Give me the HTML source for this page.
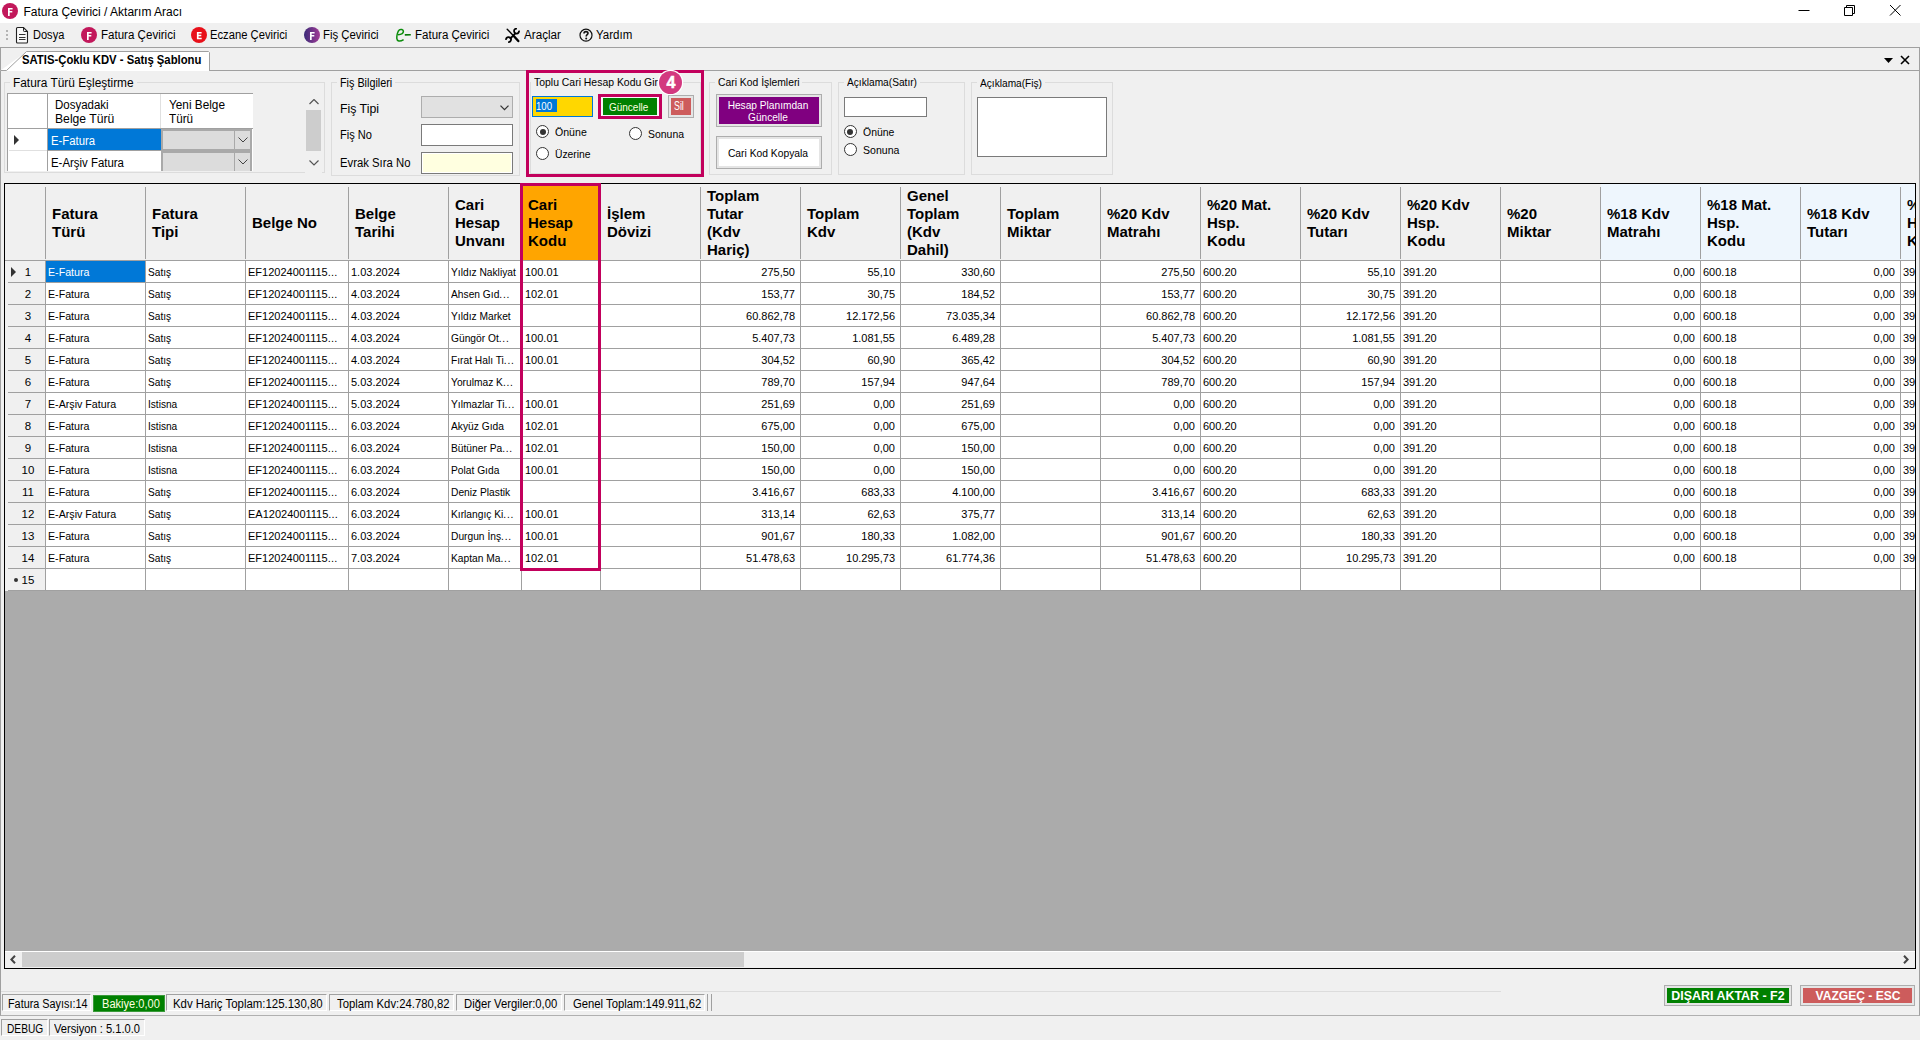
<!DOCTYPE html><html><head><meta charset="utf-8"><title>Fatura Çevirici</title><style>
*{box-sizing:border-box;margin:0;padding:0}
html,body{width:1920px;height:1040px;overflow:hidden}
body{position:relative;background:#f0f0f0;font-family:"Liberation Sans", sans-serif;font-size:12px;color:#000}
.abs{position:absolute}
.t{position:absolute;white-space:nowrap}
.gb{position:absolute;border:1px solid #dcdcdc}
.gl{position:absolute;background:#f0f0f0;height:12px}
.hd{position:absolute;top:184px;height:76px;display:flex;align-items:center;padding-top:1.5px;font-weight:bold;font-size:15px;line-height:18px;padding-left:7px;white-space:nowrap}
.vs{position:absolute;width:1px;background:#a0a0a0}
.hs{position:absolute;height:1px;background:#a0a0a0}
.c{position:absolute;height:22px;line-height:22px;font-size:11px;white-space:nowrap}
.r{text-align:right}
.radio{position:absolute;width:13px;height:13px;border-radius:50%;border:1px solid #333;background:#fff}
.radio.on::after{content:"";position:absolute;left:2.5px;top:2.5px;width:6px;height:6px;border-radius:50%;background:#333}
.sb{position:absolute;top:994px;height:17px;border-top:1px solid #a0a0a0;border-left:1px solid #a0a0a0;border-right:1px solid #fff;border-bottom:1px solid #fff}
</style></head><body>
<div class="abs" style="left:0;top:0;width:1920px;height:23px;background:#fff"></div>
<svg class="abs" style="left:2px;top:3px" width="16" height="16" viewBox="0 0 16 16"><circle cx="8" cy="8" r="8" fill="#c2185b"/><path d="M6 4.9h4.6v1.6H7.7v1.5h2.6v1.5H7.7v3.6H6z" fill="#fff"/></svg>
<div class="t" style="left:23.40px;top:4.94px;font-size:12px;line-height:14px;font-weight:400;color:#000;">Fatura Çevirici / Aktarım Aracı</div>
<svg class="abs" style="left:1795px;top:3px" width="16" height="16"><path d="M3.5 7.5h11" stroke="#000" stroke-width="1"/></svg>
<svg class="abs" style="left:1842px;top:2px" width="16" height="16"><path d="M2.5 5.5h8v8h-8z M4.5 5.5v-2h8v8h-2" fill="none" stroke="#000" stroke-width="1"/></svg>
<svg class="abs" style="left:1887px;top:3px" width="16" height="16"><path d="M3 2l10.5 10.5M13.5 2l-10.5 10.5" stroke="#000" stroke-width="1"/></svg>
<div class="abs" style="left:6px;top:30px;width:2px;height:2px;background:#b4b4b4"></div>
<div class="abs" style="left:6px;top:34px;width:2px;height:2px;background:#b4b4b4"></div>
<div class="abs" style="left:6px;top:38px;width:2px;height:2px;background:#b4b4b4"></div>
<svg class="abs" style="left:15px;top:26px" width="14" height="18" viewBox="0 0 14 18"><path d="M1.5 2.5a1 1 0 0 1 1-1h6l4 4v10.5a1 1 0 0 1-1 1h-9a1 1 0 0 1-1-1z" fill="#fafafa" stroke="#222" stroke-width="1.1"/><path d="M8.5 1.5v3.2a0.8 0.8 0 0 0 0.8 0.8h3.2" fill="none" stroke="#222" stroke-width="1"/><path d="M4 8.5h6.5M4 11.5h6.5M4 13.5h6.5" stroke="#333" stroke-width="1"/></svg>
<div class="t" style="left:33.30px;top:27.84px;font-size:12px;line-height:14px;font-weight:400;color:#000;transform:scaleX(0.920);transform-origin:left top;">Dosya</div>
<svg class="abs" style="left:81px;top:27px" width="16" height="16" viewBox="0 0 16 16"><circle cx="8" cy="8" r="8" fill="#c2185b"/><path d="M6 4.9h4.6v1.6H7.7v1.5h2.6v1.5H7.7v3.6H6z" fill="#fff"/></svg>
<div class="t" style="left:100.50px;top:27.84px;font-size:12px;line-height:14px;font-weight:400;color:#000;transform:scaleX(0.963);transform-origin:left top;">Fatura Çevirici</div>
<svg class="abs" style="left:191px;top:27px" width="16" height="16" viewBox="0 0 16 16"><circle cx="8" cy="8" r="8" fill="#e8101a"/><path d="M5.9 4.9h4.7v1.5H7.6v1.4h2.7v1.4H7.6v1.6h3.1v1.5H5.9z" fill="#fff"/></svg>
<div class="t" style="left:210.40px;top:27.84px;font-size:12px;line-height:14px;font-weight:400;color:#000;transform:scaleX(0.935);transform-origin:left top;">Eczane Çevirici</div>
<svg class="abs" style="left:304px;top:27px" width="16" height="16" viewBox="0 0 16 16"><defs><linearGradient id="g304" x1="0" y1="0" x2="1" y2="0"><stop offset="0" stop-color="#3b2a78"/><stop offset="1" stop-color="#a23c96"/></linearGradient></defs><circle cx="8" cy="8" r="8" fill="url(#g304)"/><path d="M6 4.9h4.6v1.6H7.7v1.5h2.6v1.5H7.7v3.6H6z" fill="#fff"/></svg>
<div class="t" style="left:323.20px;top:27.84px;font-size:12px;line-height:14px;font-weight:400;color:#000;transform:scaleX(0.948);transform-origin:left top;">Fiş Çevirici</div>
<svg class="abs" style="left:395px;top:28px" width="17" height="15" viewBox="0 0 17 15"><path d="M3 6.8C6 6.6 8.4 5.6 8.4 3.3C8.4 1.4 5.6 1 4.4 1.8C2.6 3 1.6 7.8 1.8 10.4C2 13.2 4.6 14.2 8.6 11.6" fill="none" stroke="#0a8c0a" stroke-width="1.5"/><path d="M9.8 6.9L15.8 6.7" stroke="#0a7a0a" stroke-width="1.6"/></svg>
<div class="t" style="left:414.50px;top:27.84px;font-size:12px;line-height:14px;font-weight:400;color:#000;transform:scaleX(0.960);transform-origin:left top;">Fatura Çevirici</div>
<svg class="abs" style="left:505px;top:28px" width="16" height="16" viewBox="0 0 16 16"><path d="M2.2 1.3L7.8 6.9" stroke="#000" stroke-width="1.4" stroke-linecap="round"/><path d="M9 8.3L13.3 13" stroke="#000" stroke-width="2.4" stroke-linecap="round"/><path d="M10.6 5.2L5 10.8" stroke="#000" stroke-width="1.9"/><path d="M11.95 0.6A2.5 2.5 0 1 0 14 2.6" fill="none" stroke="#000" stroke-width="1.8"/><path d="M3.2 14A2.5 2.5 0 1 0 1.1 11.9" fill="none" stroke="#000" stroke-width="1.8"/></svg>
<div class="t" style="left:524.25px;top:27.84px;font-size:12px;line-height:14px;font-weight:400;color:#000;transform:scaleX(0.973);transform-origin:left top;">Araçlar</div>
<svg class="abs" style="left:578.5px;top:28px" width="14" height="14" viewBox="0 0 14 14"><circle cx="7" cy="7.2" r="6" fill="none" stroke="#111" stroke-width="1.2"/><path d="M5 5.6C5 4.1 5.9 3.6 7 3.6C8.2 3.6 9 4.3 9 5.3C9 6.6 7.2 6.8 7.2 8.4" fill="none" stroke="#111" stroke-width="1.6"/><circle cx="7.2" cy="10.4" r="1" fill="#111"/></svg>
<div class="t" style="left:596.25px;top:27.84px;font-size:12px;line-height:14px;font-weight:400;color:#000;transform:scaleX(0.959);transform-origin:left top;">Yardım</div>
<div class="abs" style="left:0;top:47px;width:1920px;height:969px;border:1px solid #a0a0a0;border-bottom-color:#b0b0b0"></div>
<div class="abs" style="left:0;top:70px;width:1920px;height:1px;background:#a0a0a0"></div>
<svg class="abs" style="left:0;top:50px" width="212" height="22" viewBox="0 0 212 22"><path d="M0.5 20.5 L26.5 1.5 H209.5 V21 H0.5z" fill="#fff" stroke="none"/><path d="M0.5 20.5 H6.5 L26.5 1.5 H208.5 L209.5 2.5 V21" fill="none" stroke="#a0a0a0" stroke-width="1"/></svg>
<div class="abs" style="left:1px;top:71px;width:1917px;height:1px;background:#f0f0f0"></div>
<div class="t" style="left:22.00px;top:53.09px;font-size:12px;line-height:14px;font-weight:700;color:#000;transform:scaleX(0.942);transform-origin:left top;">SATIS-Çoklu KDV - Satış Şablonu</div>
<svg class="abs" style="left:1884px;top:57px" width="10" height="8"><path d="M0 1h9l-4.5 5z" fill="#000"/></svg>
<svg class="abs" style="left:1900px;top:55px" width="11" height="10"><path d="M1 1l8 8M9 1l-8 8" stroke="#000" stroke-width="1.6"/></svg>
<div class="gb" style="left:4px;top:82px;width:321px;height:91px"></div>
<div class="gl" style="left:10.4px;top:77px;width:126.6px"></div>
<div class="t" style="left:13.40px;top:76.14px;font-size:12px;line-height:14px;font-weight:400;color:#000;transform:scaleX(0.990);transform-origin:left top;">Fatura Türü Eşleştirme</div>
<div class="abs" style="left:7px;top:93px;width:246px;height:78px;border-left:1px solid #a0a0a0;border-top:1px solid #a0a0a0;background:#fff;overflow:hidden">
<div class="abs" style="left:39px;top:0;width:1px;height:80px;background:#a0a0a0"></div>
<div class="abs" style="left:152px;top:0;width:1px;height:34px;background:#e0e0e0"></div>
<div class="abs" style="left:0;top:34px;width:246px;height:1px;background:#a0a0a0"></div>
<div class="abs" style="left:40px;top:35px;width:113px;height:21px;background:#0078d7"></div>
<div class="abs" style="left:1px;top:56px;width:38px;height:1px;background:#e0e0e0"></div>
<div class="abs" style="left:40px;top:56px;width:113px;height:1px;background:#a0a0a0"></div>
<svg class="abs" style="left:6px;top:41px" width="6" height="10"><path d="M0 0l5 5l-5 5z" fill="#333"/></svg>
<div class="abs" style="left:153px;top:35px;width:91px;height:22px;background:#dcdcdc;border:2px solid #a9a9a9"></div>
<div class="abs" style="left:226px;top:37px;width:1px;height:18px;background:#a9a9a9"></div>
<svg class="abs" style="left:230px;top:43px" width="10" height="6"><path d="M0.5 0.5l4.5 4.5l4.5-4.5" fill="none" stroke="#444" stroke-width="1"/></svg>
<div class="abs" style="left:153px;top:57px;width:91px;height:22px;background:#dcdcdc;border:2px solid #a9a9a9"></div>
<div class="abs" style="left:226px;top:59px;width:1px;height:18px;background:#a9a9a9"></div>
<svg class="abs" style="left:230px;top:65px" width="10" height="6"><path d="M0.5 0.5l4.5 4.5l4.5-4.5" fill="none" stroke="#444" stroke-width="1"/></svg>
</div>
<div class="t" style="left:55.00px;top:98.04px;font-size:12px;line-height:14px;font-weight:400;color:#000;transform:scaleX(0.957);transform-origin:left top;">Dosyadaki</div>
<div class="t" style="left:55.00px;top:111.74px;font-size:12px;line-height:14px;font-weight:400;color:#000;transform:scaleX(1.014);transform-origin:left top;">Belge Türü</div>
<div class="t" style="left:169.30px;top:98.04px;font-size:12px;line-height:14px;font-weight:400;color:#000;transform:scaleX(0.983);transform-origin:left top;">Yeni Belge</div>
<div class="t" style="left:169.30px;top:111.74px;font-size:12px;line-height:14px;font-weight:400;color:#000;transform:scaleX(0.973);transform-origin:left top;">Türü</div>
<div class="t" style="left:51.20px;top:134.34px;font-size:12px;line-height:14px;font-weight:400;color:#fff;transform:scaleX(0.943);transform-origin:left top;">E-Fatura</div>
<div class="t" style="left:51.20px;top:155.94px;font-size:12px;line-height:14px;font-weight:400;color:#000;transform:scaleX(0.951);transform-origin:left top;">E-Arşiv Fatura</div>
<div class="abs" style="left:305px;top:93px;width:17px;height:80px;background:#f0f0f0"></div>
<div class="abs" style="left:306px;top:110px;width:15px;height:41px;background:#cdcdcd"></div>
<svg class="abs" style="left:309px;top:99px" width="10" height="6"><path d="M0.5 5l4.5-4.5l4.5 4.5" fill="none" stroke="#555" stroke-width="1.2"/></svg>
<svg class="abs" style="left:309px;top:160px" width="10" height="6"><path d="M0.5 0.5l4.5 4.5l4.5-4.5" fill="none" stroke="#555" stroke-width="1.2"/></svg>
<div class="gb" style="left:331px;top:82px;width:189px;height:94px"></div>
<div class="gl" style="left:337.2px;top:77px;width:58.2px"></div>
<div class="t" style="left:340.20px;top:76.34px;font-size:12px;line-height:14px;font-weight:400;color:#000;transform:scaleX(0.900);transform-origin:left top;">Fiş Bilgileri</div>
<div class="t" style="left:340.20px;top:102.24px;font-size:12px;line-height:14px;font-weight:400;color:#000;transform:scaleX(1.026);transform-origin:left top;">Fiş Tipi</div>
<div class="t" style="left:340.20px;top:128.04px;font-size:12px;line-height:14px;font-weight:400;color:#000;transform:scaleX(0.923);transform-origin:left top;">Fiş No</div>
<div class="t" style="left:340.20px;top:156.14px;font-size:12px;line-height:14px;font-weight:400;color:#000;transform:scaleX(0.943);transform-origin:left top;">Evrak Sıra No</div>
<div class="abs" style="left:421px;top:96px;width:92px;height:22px;background:#e1e1e1;border:1px solid #adadad"></div>
<svg class="abs" style="left:499.5px;top:105px" width="9" height="6"><path d="M0.5 0.6l4 4l4-4" fill="none" stroke="#333" stroke-width="1.3"/></svg>
<div class="abs" style="left:421px;top:124px;width:92px;height:22px;background:#fff;border:1px solid #7a7a7a"></div>
<div class="abs" style="left:421px;top:152px;width:92px;height:22px;background:#ffffe0;border:1px solid #7a7a7a;box-shadow:inset 0 0 0 1px #fff"></div>
<div class="gb" style="left:530px;top:82px;width:171px;height:92px"></div>
<div class="gl" style="left:530.7px;top:77px;width:130px"></div>
<div class="t" style="left:533.70px;top:75.28px;font-size:11.3px;line-height:14px;font-weight:400;color:#000;transform:scaleX(0.923);transform-origin:left top;">Toplu Cari Hesap Kodu Gir</div>
<div class="abs" style="left:532px;top:96px;width:61px;height:21px;background:#ffd700;border:1px solid #0078d7"></div>
<div class="abs" style="left:536px;top:99px;width:21px;height:13px;background:#0078d7"></div>
<div class="t" style="left:536.40px;top:98.88px;font-size:11.3px;line-height:14px;font-weight:400;color:#fff;transform:scaleX(0.849);transform-origin:left top;">100</div>
<div class="abs" style="left:598px;top:94px;width:64px;height:25px;border:3px solid #c2005c;background:#f8f8f8"></div>
<div class="abs" style="left:603px;top:98px;width:54px;height:17px;background:#008000"></div>
<div class="t" style="left:608.60px;top:99.98px;font-size:11.3px;line-height:14px;font-weight:400;color:#ffffe0;transform:scaleX(0.883);transform-origin:left top;">Güncelle</div>
<div class="abs" style="left:668px;top:95px;width:26px;height:23px;border:1px solid #adadad;background:#e5e5e5"></div>
<div class="abs" style="left:671px;top:98px;width:20px;height:17px;background:#cd5c5c"></div>
<div class="t" style="left:674.30px;top:99.27px;font-size:12.5px;line-height:15px;font-weight:400;color:#fff;transform:scaleX(0.705);transform-origin:left top;">Sil</div>
<div class="radio on" style="left:536.0px;top:125.1px"></div>
<div class="t" style="left:554.50px;top:125.18px;font-size:11.3px;line-height:14px;font-weight:400;color:#000;transform:scaleX(0.937);transform-origin:left top;">Önüne</div>
<div class="radio" style="left:628.9px;top:126.9px"></div>
<div class="t" style="left:647.50px;top:127.38px;font-size:11.3px;line-height:14px;font-weight:400;color:#000;transform:scaleX(0.924);transform-origin:left top;">Sonuna</div>
<div class="radio" style="left:536.0px;top:147.0px"></div>
<div class="t" style="left:554.50px;top:147.18px;font-size:11.3px;line-height:14px;font-weight:400;color:#000;transform:scaleX(0.914);transform-origin:left top;">Üzerine</div>
<div class="abs" style="left:526px;top:70px;width:178px;height:107px;border:3px solid #c2005c"></div>
<div class="abs" style="left:659px;top:70.8px;width:23px;height:23px;border-radius:50%;background:#d3387f;box-shadow:0 0 0 1.2px #fff"></div>
<div class="t" style="left:520.90px;top:72.66px;width:300px;text-align:center;font-size:16px;line-height:19px;font-weight:700;color:#fff;-webkit-text-stroke:0.5px #fff;">4</div>
<div class="gb" style="left:709px;top:82px;width:123px;height:93px"></div>
<div class="gl" style="left:714.5px;top:77px;width:87.7px"></div>
<div class="t" style="left:717.50px;top:75.22px;font-size:11.5px;line-height:14px;font-weight:400;color:#000;transform:scaleX(0.900);transform-origin:left top;">Cari Kod İşlemleri</div>
<div class="abs" style="left:716px;top:94px;width:106px;height:33px;border:1px solid #adadad;background:#e5e5e5"></div>
<div class="abs" style="left:719px;top:97px;width:100px;height:27px;background:#800080"></div>
<div class="t" style="left:617.80px;top:97.88px;width:300px;text-align:center;font-size:11.3px;line-height:14px;font-weight:400;color:#fff;transform:scaleX(0.899);transform-origin:center top;">Hesap Planımdan</div>
<div class="t" style="left:617.80px;top:110.28px;width:300px;text-align:center;font-size:11.3px;line-height:14px;font-weight:400;color:#fff;transform:scaleX(0.892);transform-origin:center top;">Güncelle</div>
<div class="abs" style="left:716px;top:136px;width:106px;height:33px;border:1px solid #adadad;background:#e5e5e5"></div>
<div class="abs" style="left:719px;top:139px;width:100px;height:27px;background:#fff"></div>
<div class="t" style="left:617.80px;top:145.98px;width:300px;text-align:center;font-size:11.3px;line-height:14px;font-weight:400;color:#000;transform:scaleX(0.912);transform-origin:center top;">Cari Kod Kopyala</div>
<div class="gb" style="left:838px;top:82px;width:127px;height:93px"></div>
<div class="gl" style="left:844px;top:77px;width:76px"></div>
<div class="t" style="left:847.00px;top:75.28px;font-size:11.3px;line-height:14px;font-weight:400;color:#000;transform:scaleX(0.899);transform-origin:left top;">Açıklama(Satır)</div>
<div class="abs" style="left:844px;top:97px;width:83px;height:20px;background:#fff;border:1px solid #7a7a7a"></div>
<div class="radio on" style="left:843.7px;top:125.1px"></div>
<div class="t" style="left:862.60px;top:125.08px;font-size:11.3px;line-height:14px;font-weight:400;color:#000;transform:scaleX(0.925);transform-origin:left top;">Önüne</div>
<div class="radio" style="left:843.7px;top:142.9px"></div>
<div class="t" style="left:862.60px;top:143.08px;font-size:11.3px;line-height:14px;font-weight:400;color:#000;transform:scaleX(0.934);transform-origin:left top;">Sonuna</div>
<div class="gb" style="left:971px;top:82px;width:142px;height:93px"></div>
<div class="gl" style="left:977.2px;top:77px;width:68px"></div>
<div class="t" style="left:980.20px;top:75.78px;font-size:11.3px;line-height:14px;font-weight:400;color:#000;transform:scaleX(0.898);transform-origin:left top;">Açıklama(Fiş)</div>
<div class="abs" style="left:977px;top:97px;width:130px;height:60px;background:#fff;border:1px solid #7a7a7a"></div>
<div class="abs" style="left:4px;top:183px;width:1912px;height:786px;border:1px solid #000;background:#ababab;overflow:hidden">
<div class="abs" style="left:0;top:0;width:2000px;height:76px;background:#f0f0f0"></div>
<div class="abs" style="left:1596px;top:0;width:400px;height:76px;background:#eef6fd"></div>
<div class="abs" style="left:516px;top:0;width:78px;height:76px;background:#ffa500"></div>
<div class="abs" style="left:0;top:76px;width:2000px;height:331px;background:#fff"></div>
<div class="abs" style="left:0;top:76px;width:40px;height:331px;background:#f0f0f0"></div>
<div class="hs" style="left:0;top:76px;width:2000px"></div>
<div class="hs" style="left:40px;top:98px;width:2000px"></div>
<div class="hs" style="left:3px;top:98px;width:37px"></div>
<div class="hs" style="left:40px;top:120px;width:2000px"></div>
<div class="hs" style="left:3px;top:120px;width:37px"></div>
<div class="hs" style="left:40px;top:142px;width:2000px"></div>
<div class="hs" style="left:3px;top:142px;width:37px"></div>
<div class="hs" style="left:40px;top:164px;width:2000px"></div>
<div class="hs" style="left:3px;top:164px;width:37px"></div>
<div class="hs" style="left:40px;top:186px;width:2000px"></div>
<div class="hs" style="left:3px;top:186px;width:37px"></div>
<div class="hs" style="left:40px;top:208px;width:2000px"></div>
<div class="hs" style="left:3px;top:208px;width:37px"></div>
<div class="hs" style="left:40px;top:230px;width:2000px"></div>
<div class="hs" style="left:3px;top:230px;width:37px"></div>
<div class="hs" style="left:40px;top:252px;width:2000px"></div>
<div class="hs" style="left:3px;top:252px;width:37px"></div>
<div class="hs" style="left:40px;top:274px;width:2000px"></div>
<div class="hs" style="left:3px;top:274px;width:37px"></div>
<div class="hs" style="left:40px;top:296px;width:2000px"></div>
<div class="hs" style="left:3px;top:296px;width:37px"></div>
<div class="hs" style="left:40px;top:318px;width:2000px"></div>
<div class="hs" style="left:3px;top:318px;width:37px"></div>
<div class="hs" style="left:40px;top:340px;width:2000px"></div>
<div class="hs" style="left:3px;top:340px;width:37px"></div>
<div class="hs" style="left:40px;top:362px;width:2000px"></div>
<div class="hs" style="left:3px;top:362px;width:37px"></div>
<div class="hs" style="left:40px;top:384px;width:2000px"></div>
<div class="hs" style="left:3px;top:384px;width:37px"></div>
<div class="hs" style="left:40px;top:406px;width:2000px"></div>
<div class="hs" style="left:3px;top:406px;width:37px"></div>
<div class="vs" style="left:40px;top:3px;height:72px"></div>
<div class="vs" style="left:40px;top:76px;height:331px"></div>
<div class="vs" style="left:140px;top:3px;height:72px"></div>
<div class="vs" style="left:140px;top:76px;height:331px"></div>
<div class="vs" style="left:240px;top:3px;height:72px"></div>
<div class="vs" style="left:240px;top:76px;height:331px"></div>
<div class="vs" style="left:343px;top:3px;height:72px"></div>
<div class="vs" style="left:343px;top:76px;height:331px"></div>
<div class="vs" style="left:443px;top:3px;height:72px"></div>
<div class="vs" style="left:443px;top:76px;height:331px"></div>
<div class="vs" style="left:516px;top:3px;height:72px"></div>
<div class="vs" style="left:516px;top:76px;height:331px"></div>
<div class="vs" style="left:595px;top:3px;height:72px"></div>
<div class="vs" style="left:595px;top:76px;height:331px"></div>
<div class="vs" style="left:695px;top:3px;height:72px"></div>
<div class="vs" style="left:695px;top:76px;height:331px"></div>
<div class="vs" style="left:795px;top:3px;height:72px"></div>
<div class="vs" style="left:795px;top:76px;height:331px"></div>
<div class="vs" style="left:895px;top:3px;height:72px"></div>
<div class="vs" style="left:895px;top:76px;height:331px"></div>
<div class="vs" style="left:995px;top:3px;height:72px"></div>
<div class="vs" style="left:995px;top:76px;height:331px"></div>
<div class="vs" style="left:1095px;top:3px;height:72px"></div>
<div class="vs" style="left:1095px;top:76px;height:331px"></div>
<div class="vs" style="left:1195px;top:3px;height:72px"></div>
<div class="vs" style="left:1195px;top:76px;height:331px"></div>
<div class="vs" style="left:1295px;top:3px;height:72px"></div>
<div class="vs" style="left:1295px;top:76px;height:331px"></div>
<div class="vs" style="left:1395px;top:3px;height:72px"></div>
<div class="vs" style="left:1395px;top:76px;height:331px"></div>
<div class="vs" style="left:1495px;top:3px;height:72px"></div>
<div class="vs" style="left:1495px;top:76px;height:331px"></div>
<div class="vs" style="left:1595px;top:3px;height:72px"></div>
<div class="vs" style="left:1595px;top:76px;height:331px"></div>
<div class="vs" style="left:1695px;top:3px;height:72px"></div>
<div class="vs" style="left:1695px;top:76px;height:331px"></div>
<div class="vs" style="left:1795px;top:3px;height:72px"></div>
<div class="vs" style="left:1795px;top:76px;height:331px"></div>
<div class="vs" style="left:1895px;top:3px;height:72px"></div>
<div class="vs" style="left:1895px;top:76px;height:331px"></div>
<div class="hd" style="left:40px;top:0;width:100px">Fatura<br>Türü</div>
<div class="hd" style="left:140px;top:0;width:100px">Fatura<br>Tipi</div>
<div class="hd" style="left:240px;top:0;width:103px">Belge No</div>
<div class="hd" style="left:343px;top:0;width:100px">Belge<br>Tarihi</div>
<div class="hd" style="left:443px;top:0;width:73px">Cari<br>Hesap<br>Unvanı</div>
<div class="hd" style="left:516px;top:0;width:79px">Cari<br>Hesap<br>Kodu</div>
<div class="hd" style="left:595px;top:0;width:100px">İşlem<br>Dövizi</div>
<div class="hd" style="left:695px;top:0;width:100px">Toplam<br>Tutar<br>(Kdv<br>Hariç)</div>
<div class="hd" style="left:795px;top:0;width:100px">Toplam<br>Kdv</div>
<div class="hd" style="left:895px;top:0;width:100px">Genel<br>Toplam<br>(Kdv<br>Dahil)</div>
<div class="hd" style="left:995px;top:0;width:100px">Toplam<br>Miktar</div>
<div class="hd" style="left:1095px;top:0;width:100px">%20 Kdv<br>Matrahı</div>
<div class="hd" style="left:1195px;top:0;width:100px">%20 Mat.<br>Hsp.<br>Kodu</div>
<div class="hd" style="left:1295px;top:0;width:100px">%20 Kdv<br>Tutarı</div>
<div class="hd" style="left:1395px;top:0;width:100px">%20 Kdv<br>Hsp.<br>Kodu</div>
<div class="hd" style="left:1495px;top:0;width:100px">%20<br>Miktar</div>
<div class="hd" style="left:1595px;top:0;width:100px">%18 Kdv<br>Matrahı</div>
<div class="hd" style="left:1695px;top:0;width:100px">%18 Mat.<br>Hsp.<br>Kodu</div>
<div class="hd" style="left:1795px;top:0;width:100px">%18 Kdv<br>Tutarı</div>
<div class="hd" style="left:1895px;top:0;width:100px">%18 Kdv<br>Hsp.<br>Kodu</div>
<div class="abs" style="left:41px;top:77px;width:99px;height:21px;background:#0078d7"></div>
<div class="c" style="left:43px;top:77px;color:#fff;transform:scaleX(0.97);transform-origin:left top;">E-Fatura</div>
<div class="c" style="left:143px;top:77px;color:#000;transform:scaleX(0.92);transform-origin:left top;">Satış</div>
<div class="c" style="left:243px;top:77px;color:#000;">EF12024001115<span style="letter-spacing:0.2px">...</span></div>
<div class="c" style="left:346px;top:77px;color:#000;">1.03.2024</div>
<div class="c" style="left:446px;top:77px;color:#000;transform:scaleX(0.93);transform-origin:left top;">Yıldız Nakliyat</div>
<div class="c" style="left:520px;top:77px;color:#000;">100.01</div>
<div class="c r" style="left:695px;top:77px;width:95px;color:#000">275,50</div>
<div class="c r" style="left:795px;top:77px;width:95px;color:#000">55,10</div>
<div class="c r" style="left:895px;top:77px;width:95px;color:#000">330,60</div>
<div class="c r" style="left:1095px;top:77px;width:95px;color:#000">275,50</div>
<div class="c" style="left:1198px;top:77px;color:#000;">600.20</div>
<div class="c r" style="left:1295px;top:77px;width:95px;color:#000">55,10</div>
<div class="c" style="left:1398px;top:77px;color:#000;">391.20</div>
<div class="c r" style="left:1595px;top:77px;width:95px;color:#000">0,00</div>
<div class="c" style="left:1698px;top:77px;color:#000;">600.18</div>
<div class="c r" style="left:1795px;top:77px;width:95px;color:#000">0,00</div>
<div class="c" style="left:1898px;top:77px;color:#000;">39</div>
<div class="c" style="left:3px;top:77px;width:40px;text-align:center;font-size:11.5px">1</div>
<div class="c" style="left:43px;top:99px;color:#000;transform:scaleX(0.97);transform-origin:left top;">E-Fatura</div>
<div class="c" style="left:143px;top:99px;color:#000;transform:scaleX(0.92);transform-origin:left top;">Satış</div>
<div class="c" style="left:243px;top:99px;color:#000;">EF12024001115<span style="letter-spacing:0.2px">...</span></div>
<div class="c" style="left:346px;top:99px;color:#000;">4.03.2024</div>
<div class="c" style="left:446px;top:99px;color:#000;transform:scaleX(0.93);transform-origin:left top;">Ahsen Gıd<span style="letter-spacing:0.8px">...</span></div>
<div class="c" style="left:520px;top:99px;color:#000;">102.01</div>
<div class="c r" style="left:695px;top:99px;width:95px;color:#000">153,77</div>
<div class="c r" style="left:795px;top:99px;width:95px;color:#000">30,75</div>
<div class="c r" style="left:895px;top:99px;width:95px;color:#000">184,52</div>
<div class="c r" style="left:1095px;top:99px;width:95px;color:#000">153,77</div>
<div class="c" style="left:1198px;top:99px;color:#000;">600.20</div>
<div class="c r" style="left:1295px;top:99px;width:95px;color:#000">30,75</div>
<div class="c" style="left:1398px;top:99px;color:#000;">391.20</div>
<div class="c r" style="left:1595px;top:99px;width:95px;color:#000">0,00</div>
<div class="c" style="left:1698px;top:99px;color:#000;">600.18</div>
<div class="c r" style="left:1795px;top:99px;width:95px;color:#000">0,00</div>
<div class="c" style="left:1898px;top:99px;color:#000;">39</div>
<div class="c" style="left:3px;top:99px;width:40px;text-align:center;font-size:11.5px">2</div>
<div class="c" style="left:43px;top:121px;color:#000;transform:scaleX(0.97);transform-origin:left top;">E-Fatura</div>
<div class="c" style="left:143px;top:121px;color:#000;transform:scaleX(0.92);transform-origin:left top;">Satış</div>
<div class="c" style="left:243px;top:121px;color:#000;">EF12024001115<span style="letter-spacing:0.2px">...</span></div>
<div class="c" style="left:346px;top:121px;color:#000;">4.03.2024</div>
<div class="c" style="left:446px;top:121px;color:#000;transform:scaleX(0.93);transform-origin:left top;">Yıldız Market</div>
<div class="c r" style="left:695px;top:121px;width:95px;color:#000">60.862,78</div>
<div class="c r" style="left:795px;top:121px;width:95px;color:#000">12.172,56</div>
<div class="c r" style="left:895px;top:121px;width:95px;color:#000">73.035,34</div>
<div class="c r" style="left:1095px;top:121px;width:95px;color:#000">60.862,78</div>
<div class="c" style="left:1198px;top:121px;color:#000;">600.20</div>
<div class="c r" style="left:1295px;top:121px;width:95px;color:#000">12.172,56</div>
<div class="c" style="left:1398px;top:121px;color:#000;">391.20</div>
<div class="c r" style="left:1595px;top:121px;width:95px;color:#000">0,00</div>
<div class="c" style="left:1698px;top:121px;color:#000;">600.18</div>
<div class="c r" style="left:1795px;top:121px;width:95px;color:#000">0,00</div>
<div class="c" style="left:1898px;top:121px;color:#000;">39</div>
<div class="c" style="left:3px;top:121px;width:40px;text-align:center;font-size:11.5px">3</div>
<div class="c" style="left:43px;top:143px;color:#000;transform:scaleX(0.97);transform-origin:left top;">E-Fatura</div>
<div class="c" style="left:143px;top:143px;color:#000;transform:scaleX(0.92);transform-origin:left top;">Satış</div>
<div class="c" style="left:243px;top:143px;color:#000;">EF12024001115<span style="letter-spacing:0.2px">...</span></div>
<div class="c" style="left:346px;top:143px;color:#000;">4.03.2024</div>
<div class="c" style="left:446px;top:143px;color:#000;transform:scaleX(0.93);transform-origin:left top;">Güngör Ot<span style="letter-spacing:0.8px">...</span></div>
<div class="c" style="left:520px;top:143px;color:#000;">100.01</div>
<div class="c r" style="left:695px;top:143px;width:95px;color:#000">5.407,73</div>
<div class="c r" style="left:795px;top:143px;width:95px;color:#000">1.081,55</div>
<div class="c r" style="left:895px;top:143px;width:95px;color:#000">6.489,28</div>
<div class="c r" style="left:1095px;top:143px;width:95px;color:#000">5.407,73</div>
<div class="c" style="left:1198px;top:143px;color:#000;">600.20</div>
<div class="c r" style="left:1295px;top:143px;width:95px;color:#000">1.081,55</div>
<div class="c" style="left:1398px;top:143px;color:#000;">391.20</div>
<div class="c r" style="left:1595px;top:143px;width:95px;color:#000">0,00</div>
<div class="c" style="left:1698px;top:143px;color:#000;">600.18</div>
<div class="c r" style="left:1795px;top:143px;width:95px;color:#000">0,00</div>
<div class="c" style="left:1898px;top:143px;color:#000;">39</div>
<div class="c" style="left:3px;top:143px;width:40px;text-align:center;font-size:11.5px">4</div>
<div class="c" style="left:43px;top:165px;color:#000;transform:scaleX(0.97);transform-origin:left top;">E-Fatura</div>
<div class="c" style="left:143px;top:165px;color:#000;transform:scaleX(0.92);transform-origin:left top;">Satış</div>
<div class="c" style="left:243px;top:165px;color:#000;">EF12024001115<span style="letter-spacing:0.2px">...</span></div>
<div class="c" style="left:346px;top:165px;color:#000;">4.03.2024</div>
<div class="c" style="left:446px;top:165px;color:#000;transform:scaleX(0.93);transform-origin:left top;">Fırat Halı Ti<span style="letter-spacing:0.8px">...</span></div>
<div class="c" style="left:520px;top:165px;color:#000;">100.01</div>
<div class="c r" style="left:695px;top:165px;width:95px;color:#000">304,52</div>
<div class="c r" style="left:795px;top:165px;width:95px;color:#000">60,90</div>
<div class="c r" style="left:895px;top:165px;width:95px;color:#000">365,42</div>
<div class="c r" style="left:1095px;top:165px;width:95px;color:#000">304,52</div>
<div class="c" style="left:1198px;top:165px;color:#000;">600.20</div>
<div class="c r" style="left:1295px;top:165px;width:95px;color:#000">60,90</div>
<div class="c" style="left:1398px;top:165px;color:#000;">391.20</div>
<div class="c r" style="left:1595px;top:165px;width:95px;color:#000">0,00</div>
<div class="c" style="left:1698px;top:165px;color:#000;">600.18</div>
<div class="c r" style="left:1795px;top:165px;width:95px;color:#000">0,00</div>
<div class="c" style="left:1898px;top:165px;color:#000;">39</div>
<div class="c" style="left:3px;top:165px;width:40px;text-align:center;font-size:11.5px">5</div>
<div class="c" style="left:43px;top:187px;color:#000;transform:scaleX(0.97);transform-origin:left top;">E-Fatura</div>
<div class="c" style="left:143px;top:187px;color:#000;transform:scaleX(0.92);transform-origin:left top;">Satış</div>
<div class="c" style="left:243px;top:187px;color:#000;">EF12024001115<span style="letter-spacing:0.2px">...</span></div>
<div class="c" style="left:346px;top:187px;color:#000;">5.03.2024</div>
<div class="c" style="left:446px;top:187px;color:#000;transform:scaleX(0.93);transform-origin:left top;">Yorulmaz K<span style="letter-spacing:0.8px">...</span></div>
<div class="c r" style="left:695px;top:187px;width:95px;color:#000">789,70</div>
<div class="c r" style="left:795px;top:187px;width:95px;color:#000">157,94</div>
<div class="c r" style="left:895px;top:187px;width:95px;color:#000">947,64</div>
<div class="c r" style="left:1095px;top:187px;width:95px;color:#000">789,70</div>
<div class="c" style="left:1198px;top:187px;color:#000;">600.20</div>
<div class="c r" style="left:1295px;top:187px;width:95px;color:#000">157,94</div>
<div class="c" style="left:1398px;top:187px;color:#000;">391.20</div>
<div class="c r" style="left:1595px;top:187px;width:95px;color:#000">0,00</div>
<div class="c" style="left:1698px;top:187px;color:#000;">600.18</div>
<div class="c r" style="left:1795px;top:187px;width:95px;color:#000">0,00</div>
<div class="c" style="left:1898px;top:187px;color:#000;">39</div>
<div class="c" style="left:3px;top:187px;width:40px;text-align:center;font-size:11.5px">6</div>
<div class="c" style="left:43px;top:209px;color:#000;transform:scaleX(0.97);transform-origin:left top;">E-Arşiv Fatura</div>
<div class="c" style="left:143px;top:209px;color:#000;transform:scaleX(0.92);transform-origin:left top;">Istisna</div>
<div class="c" style="left:243px;top:209px;color:#000;">EF12024001115<span style="letter-spacing:0.2px">...</span></div>
<div class="c" style="left:346px;top:209px;color:#000;">5.03.2024</div>
<div class="c" style="left:446px;top:209px;color:#000;transform:scaleX(0.93);transform-origin:left top;">Yılmazlar Ti<span style="letter-spacing:0.8px">...</span></div>
<div class="c" style="left:520px;top:209px;color:#000;">100.01</div>
<div class="c r" style="left:695px;top:209px;width:95px;color:#000">251,69</div>
<div class="c r" style="left:795px;top:209px;width:95px;color:#000">0,00</div>
<div class="c r" style="left:895px;top:209px;width:95px;color:#000">251,69</div>
<div class="c r" style="left:1095px;top:209px;width:95px;color:#000">0,00</div>
<div class="c" style="left:1198px;top:209px;color:#000;">600.20</div>
<div class="c r" style="left:1295px;top:209px;width:95px;color:#000">0,00</div>
<div class="c" style="left:1398px;top:209px;color:#000;">391.20</div>
<div class="c r" style="left:1595px;top:209px;width:95px;color:#000">0,00</div>
<div class="c" style="left:1698px;top:209px;color:#000;">600.18</div>
<div class="c r" style="left:1795px;top:209px;width:95px;color:#000">0,00</div>
<div class="c" style="left:1898px;top:209px;color:#000;">39</div>
<div class="c" style="left:3px;top:209px;width:40px;text-align:center;font-size:11.5px">7</div>
<div class="c" style="left:43px;top:231px;color:#000;transform:scaleX(0.97);transform-origin:left top;">E-Fatura</div>
<div class="c" style="left:143px;top:231px;color:#000;transform:scaleX(0.92);transform-origin:left top;">Istisna</div>
<div class="c" style="left:243px;top:231px;color:#000;">EF12024001115<span style="letter-spacing:0.2px">...</span></div>
<div class="c" style="left:346px;top:231px;color:#000;">6.03.2024</div>
<div class="c" style="left:446px;top:231px;color:#000;transform:scaleX(0.93);transform-origin:left top;">Akyüz Gıda</div>
<div class="c" style="left:520px;top:231px;color:#000;">102.01</div>
<div class="c r" style="left:695px;top:231px;width:95px;color:#000">675,00</div>
<div class="c r" style="left:795px;top:231px;width:95px;color:#000">0,00</div>
<div class="c r" style="left:895px;top:231px;width:95px;color:#000">675,00</div>
<div class="c r" style="left:1095px;top:231px;width:95px;color:#000">0,00</div>
<div class="c" style="left:1198px;top:231px;color:#000;">600.20</div>
<div class="c r" style="left:1295px;top:231px;width:95px;color:#000">0,00</div>
<div class="c" style="left:1398px;top:231px;color:#000;">391.20</div>
<div class="c r" style="left:1595px;top:231px;width:95px;color:#000">0,00</div>
<div class="c" style="left:1698px;top:231px;color:#000;">600.18</div>
<div class="c r" style="left:1795px;top:231px;width:95px;color:#000">0,00</div>
<div class="c" style="left:1898px;top:231px;color:#000;">39</div>
<div class="c" style="left:3px;top:231px;width:40px;text-align:center;font-size:11.5px">8</div>
<div class="c" style="left:43px;top:253px;color:#000;transform:scaleX(0.97);transform-origin:left top;">E-Fatura</div>
<div class="c" style="left:143px;top:253px;color:#000;transform:scaleX(0.92);transform-origin:left top;">Istisna</div>
<div class="c" style="left:243px;top:253px;color:#000;">EF12024001115<span style="letter-spacing:0.2px">...</span></div>
<div class="c" style="left:346px;top:253px;color:#000;">6.03.2024</div>
<div class="c" style="left:446px;top:253px;color:#000;transform:scaleX(0.93);transform-origin:left top;">Bütüner Pa<span style="letter-spacing:0.8px">...</span></div>
<div class="c" style="left:520px;top:253px;color:#000;">102.01</div>
<div class="c r" style="left:695px;top:253px;width:95px;color:#000">150,00</div>
<div class="c r" style="left:795px;top:253px;width:95px;color:#000">0,00</div>
<div class="c r" style="left:895px;top:253px;width:95px;color:#000">150,00</div>
<div class="c r" style="left:1095px;top:253px;width:95px;color:#000">0,00</div>
<div class="c" style="left:1198px;top:253px;color:#000;">600.20</div>
<div class="c r" style="left:1295px;top:253px;width:95px;color:#000">0,00</div>
<div class="c" style="left:1398px;top:253px;color:#000;">391.20</div>
<div class="c r" style="left:1595px;top:253px;width:95px;color:#000">0,00</div>
<div class="c" style="left:1698px;top:253px;color:#000;">600.18</div>
<div class="c r" style="left:1795px;top:253px;width:95px;color:#000">0,00</div>
<div class="c" style="left:1898px;top:253px;color:#000;">39</div>
<div class="c" style="left:3px;top:253px;width:40px;text-align:center;font-size:11.5px">9</div>
<div class="c" style="left:43px;top:275px;color:#000;transform:scaleX(0.97);transform-origin:left top;">E-Fatura</div>
<div class="c" style="left:143px;top:275px;color:#000;transform:scaleX(0.92);transform-origin:left top;">Istisna</div>
<div class="c" style="left:243px;top:275px;color:#000;">EF12024001115<span style="letter-spacing:0.2px">...</span></div>
<div class="c" style="left:346px;top:275px;color:#000;">6.03.2024</div>
<div class="c" style="left:446px;top:275px;color:#000;transform:scaleX(0.93);transform-origin:left top;">Polat Gıda</div>
<div class="c" style="left:520px;top:275px;color:#000;">100.01</div>
<div class="c r" style="left:695px;top:275px;width:95px;color:#000">150,00</div>
<div class="c r" style="left:795px;top:275px;width:95px;color:#000">0,00</div>
<div class="c r" style="left:895px;top:275px;width:95px;color:#000">150,00</div>
<div class="c r" style="left:1095px;top:275px;width:95px;color:#000">0,00</div>
<div class="c" style="left:1198px;top:275px;color:#000;">600.20</div>
<div class="c r" style="left:1295px;top:275px;width:95px;color:#000">0,00</div>
<div class="c" style="left:1398px;top:275px;color:#000;">391.20</div>
<div class="c r" style="left:1595px;top:275px;width:95px;color:#000">0,00</div>
<div class="c" style="left:1698px;top:275px;color:#000;">600.18</div>
<div class="c r" style="left:1795px;top:275px;width:95px;color:#000">0,00</div>
<div class="c" style="left:1898px;top:275px;color:#000;">39</div>
<div class="c" style="left:3px;top:275px;width:40px;text-align:center;font-size:11.5px">10</div>
<div class="c" style="left:43px;top:297px;color:#000;transform:scaleX(0.97);transform-origin:left top;">E-Fatura</div>
<div class="c" style="left:143px;top:297px;color:#000;transform:scaleX(0.92);transform-origin:left top;">Satış</div>
<div class="c" style="left:243px;top:297px;color:#000;">EF12024001115<span style="letter-spacing:0.2px">...</span></div>
<div class="c" style="left:346px;top:297px;color:#000;">6.03.2024</div>
<div class="c" style="left:446px;top:297px;color:#000;transform:scaleX(0.93);transform-origin:left top;">Deniz Plastik</div>
<div class="c r" style="left:695px;top:297px;width:95px;color:#000">3.416,67</div>
<div class="c r" style="left:795px;top:297px;width:95px;color:#000">683,33</div>
<div class="c r" style="left:895px;top:297px;width:95px;color:#000">4.100,00</div>
<div class="c r" style="left:1095px;top:297px;width:95px;color:#000">3.416,67</div>
<div class="c" style="left:1198px;top:297px;color:#000;">600.20</div>
<div class="c r" style="left:1295px;top:297px;width:95px;color:#000">683,33</div>
<div class="c" style="left:1398px;top:297px;color:#000;">391.20</div>
<div class="c r" style="left:1595px;top:297px;width:95px;color:#000">0,00</div>
<div class="c" style="left:1698px;top:297px;color:#000;">600.18</div>
<div class="c r" style="left:1795px;top:297px;width:95px;color:#000">0,00</div>
<div class="c" style="left:1898px;top:297px;color:#000;">39</div>
<div class="c" style="left:3px;top:297px;width:40px;text-align:center;font-size:11.5px">11</div>
<div class="c" style="left:43px;top:319px;color:#000;transform:scaleX(0.97);transform-origin:left top;">E-Arşiv Fatura</div>
<div class="c" style="left:143px;top:319px;color:#000;transform:scaleX(0.92);transform-origin:left top;">Satış</div>
<div class="c" style="left:243px;top:319px;color:#000;">EA12024001115<span style="letter-spacing:0.2px">...</span></div>
<div class="c" style="left:346px;top:319px;color:#000;">6.03.2024</div>
<div class="c" style="left:446px;top:319px;color:#000;transform:scaleX(0.93);transform-origin:left top;">Kırlangıç Ki<span style="letter-spacing:0.8px">...</span></div>
<div class="c" style="left:520px;top:319px;color:#000;">100.01</div>
<div class="c r" style="left:695px;top:319px;width:95px;color:#000">313,14</div>
<div class="c r" style="left:795px;top:319px;width:95px;color:#000">62,63</div>
<div class="c r" style="left:895px;top:319px;width:95px;color:#000">375,77</div>
<div class="c r" style="left:1095px;top:319px;width:95px;color:#000">313,14</div>
<div class="c" style="left:1198px;top:319px;color:#000;">600.20</div>
<div class="c r" style="left:1295px;top:319px;width:95px;color:#000">62,63</div>
<div class="c" style="left:1398px;top:319px;color:#000;">391.20</div>
<div class="c r" style="left:1595px;top:319px;width:95px;color:#000">0,00</div>
<div class="c" style="left:1698px;top:319px;color:#000;">600.18</div>
<div class="c r" style="left:1795px;top:319px;width:95px;color:#000">0,00</div>
<div class="c" style="left:1898px;top:319px;color:#000;">39</div>
<div class="c" style="left:3px;top:319px;width:40px;text-align:center;font-size:11.5px">12</div>
<div class="c" style="left:43px;top:341px;color:#000;transform:scaleX(0.97);transform-origin:left top;">E-Fatura</div>
<div class="c" style="left:143px;top:341px;color:#000;transform:scaleX(0.92);transform-origin:left top;">Satış</div>
<div class="c" style="left:243px;top:341px;color:#000;">EF12024001115<span style="letter-spacing:0.2px">...</span></div>
<div class="c" style="left:346px;top:341px;color:#000;">6.03.2024</div>
<div class="c" style="left:446px;top:341px;color:#000;transform:scaleX(0.93);transform-origin:left top;">Durgun İnş<span style="letter-spacing:0.8px">...</span></div>
<div class="c" style="left:520px;top:341px;color:#000;">100.01</div>
<div class="c r" style="left:695px;top:341px;width:95px;color:#000">901,67</div>
<div class="c r" style="left:795px;top:341px;width:95px;color:#000">180,33</div>
<div class="c r" style="left:895px;top:341px;width:95px;color:#000">1.082,00</div>
<div class="c r" style="left:1095px;top:341px;width:95px;color:#000">901,67</div>
<div class="c" style="left:1198px;top:341px;color:#000;">600.20</div>
<div class="c r" style="left:1295px;top:341px;width:95px;color:#000">180,33</div>
<div class="c" style="left:1398px;top:341px;color:#000;">391.20</div>
<div class="c r" style="left:1595px;top:341px;width:95px;color:#000">0,00</div>
<div class="c" style="left:1698px;top:341px;color:#000;">600.18</div>
<div class="c r" style="left:1795px;top:341px;width:95px;color:#000">0,00</div>
<div class="c" style="left:1898px;top:341px;color:#000;">39</div>
<div class="c" style="left:3px;top:341px;width:40px;text-align:center;font-size:11.5px">13</div>
<div class="c" style="left:43px;top:363px;color:#000;transform:scaleX(0.97);transform-origin:left top;">E-Fatura</div>
<div class="c" style="left:143px;top:363px;color:#000;transform:scaleX(0.92);transform-origin:left top;">Satış</div>
<div class="c" style="left:243px;top:363px;color:#000;">EF12024001115<span style="letter-spacing:0.2px">...</span></div>
<div class="c" style="left:346px;top:363px;color:#000;">7.03.2024</div>
<div class="c" style="left:446px;top:363px;color:#000;transform:scaleX(0.93);transform-origin:left top;">Kaptan Ma<span style="letter-spacing:0.8px">...</span></div>
<div class="c" style="left:520px;top:363px;color:#000;">102.01</div>
<div class="c r" style="left:695px;top:363px;width:95px;color:#000">51.478,63</div>
<div class="c r" style="left:795px;top:363px;width:95px;color:#000">10.295,73</div>
<div class="c r" style="left:895px;top:363px;width:95px;color:#000">61.774,36</div>
<div class="c r" style="left:1095px;top:363px;width:95px;color:#000">51.478,63</div>
<div class="c" style="left:1198px;top:363px;color:#000;">600.20</div>
<div class="c r" style="left:1295px;top:363px;width:95px;color:#000">10.295,73</div>
<div class="c" style="left:1398px;top:363px;color:#000;">391.20</div>
<div class="c r" style="left:1595px;top:363px;width:95px;color:#000">0,00</div>
<div class="c" style="left:1698px;top:363px;color:#000;">600.18</div>
<div class="c r" style="left:1795px;top:363px;width:95px;color:#000">0,00</div>
<div class="c" style="left:1898px;top:363px;color:#000;">39</div>
<div class="c" style="left:3px;top:363px;width:40px;text-align:center;font-size:11.5px">14</div>
<div class="c" style="left:3px;top:385px;width:40px;text-align:center;font-size:11.5px">15</div>
<div class="abs" style="left:9px;top:394px;width:4px;height:4px;border-radius:50%;background:#333"></div>
<svg class="abs" style="left:6px;top:83px" width="6" height="10"><path d="M0 0l5 5l-5 5z" fill="#333"/></svg>
<div class="abs" style="left:0;top:767px;width:1910px;height:17px;background:#f0f0f0"></div>
<div class="abs" style="left:0;top:767px;width:1910px;height:1px;background:#fff"></div>
<div class="abs" style="left:17px;top:768px;width:722px;height:15px;background:#cdcdcd"></div>
<svg class="abs" style="left:5px;top:771px" width="6" height="9"><path d="M5 0.8l-3.6 3.7l3.6 3.7" fill="none" stroke="#444" stroke-width="2"/></svg>
<svg class="abs" style="left:1898px;top:771px" width="6" height="9"><path d="M1 0.8l3.6 3.7l-3.6 3.7" fill="none" stroke="#444" stroke-width="2"/></svg>
</div>
<div class="abs" style="left:520px;top:183px;width:81px;height:388px;border:3px solid #c2005c"></div>
<div class="abs" style="left:1px;top:991px;width:1500px;height:1px;background:#dcdcdc"></div>
<div class="sb" style="left:2px;width:89px"></div>
<div class="t" style="left:7.50px;top:997.04px;font-size:12px;line-height:14px;font-weight:400;color:#000;transform:scaleX(0.903);transform-origin:left top;">Fatura Sayısı:14</div>
<div class="abs" style="left:93px;top:995px;width:72px;height:17px;background:#008000;border:1px solid #3a9a3a"></div>
<div class="t" style="left:101.50px;top:997.04px;font-size:12px;line-height:14px;font-weight:400;color:#ffffe0;transform:scaleX(0.923);transform-origin:left top;">Bakiye:0,00</div>
<div class="sb" style="left:166px;width:161px"></div>
<div class="t" style="left:173.30px;top:997.04px;font-size:12px;line-height:14px;font-weight:400;color:#000;transform:scaleX(0.952);transform-origin:left top;">Kdv Hariç Toplam:125.130,80</div>
<div class="sb" style="left:329px;width:125px"></div>
<div class="t" style="left:337.30px;top:997.04px;font-size:12px;line-height:14px;font-weight:400;color:#000;transform:scaleX(0.942);transform-origin:left top;">Toplam Kdv:24.780,82</div>
<div class="sb" style="left:456px;width:106px"></div>
<div class="t" style="left:464.25px;top:997.04px;font-size:12px;line-height:14px;font-weight:400;color:#000;transform:scaleX(0.938);transform-origin:left top;">Diğer Vergiler:0,00</div>
<div class="sb" style="left:564px;width:141px"></div>
<div class="t" style="left:572.50px;top:997.04px;font-size:12px;line-height:14px;font-weight:400;color:#000;transform:scaleX(0.941);transform-origin:left top;">Genel Toplam:149.911,62</div>
<div class="abs" style="left:707px;top:994px;width:1px;height:17px;background:#a0a0a0"></div>
<div class="abs" style="left:711px;top:994px;width:1px;height:17px;background:#a0a0a0"></div>
<div class="abs" style="left:1664px;top:985px;width:128px;height:21px;border:1px solid #adadad;background:#e5e5e5"></div>
<div class="abs" style="left:1667px;top:988px;width:122px;height:15px;background:#008000"></div>
<div class="t" style="left:1577.90px;top:987.80px;width:300px;text-align:center;font-size:13px;line-height:16px;font-weight:700;color:#fff;transform:scaleX(0.956);transform-origin:center top;">DIŞARI AKTAR - F2</div>
<div class="abs" style="left:1800px;top:985px;width:115px;height:21px;border:1px solid #adadad;background:#e5e5e5"></div>
<div class="abs" style="left:1803px;top:988px;width:109px;height:15px;background:#cd5c5c"></div>
<div class="t" style="left:1707.50px;top:987.80px;width:300px;text-align:center;font-size:13px;line-height:16px;font-weight:700;color:#fff;transform:scaleX(0.929);transform-origin:center top;">VAZGEÇ - ESC</div>
<div class="sb" style="left:1px;top:1019px;width:47px"></div>
<div class="t" style="left:6.50px;top:1021.54px;font-size:12px;line-height:14px;font-weight:400;color:#000;transform:scaleX(0.848);transform-origin:left top;">DEBUG</div>
<div class="sb" style="left:49px;top:1019px;width:96px"></div>
<div class="t" style="left:54.00px;top:1021.54px;font-size:12px;line-height:14px;font-weight:400;color:#000;transform:scaleX(0.927);transform-origin:left top;">Versiyon : 5.1.0.0</div>
</body></html>
